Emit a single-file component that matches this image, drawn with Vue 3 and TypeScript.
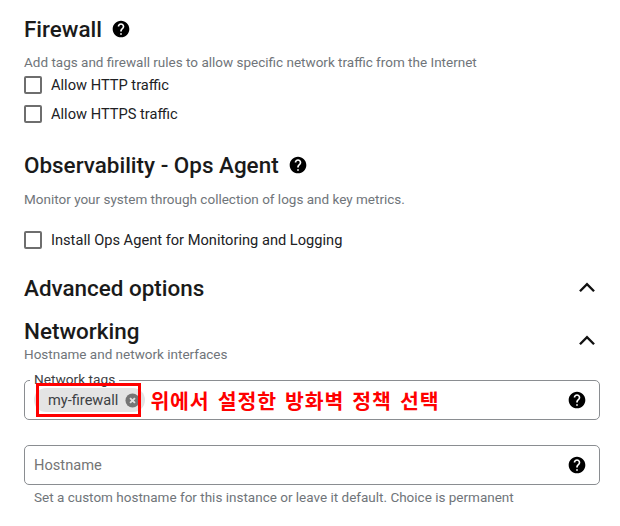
<script setup lang="ts">
const helpPath = 'M12 2C6.48 2 2 6.48 2 12s4.48 10 10 10 10-4.48 10-10S17.52 2 12 2zm1 17h-2v-2h2v2zm2.07-7.75l-.9.92C13.45 12.9 13 13.5 13 15h-2v-.5c0-1.1.45-2.1 1.17-2.83l1.24-1.26c.37-.36.59-.86.59-1.41 0-1.1-.9-2-2-2s-2 .9-2 2H8c0-2.21 1.79-4 4-4s4 1.79 4 4c0 .88-.36 1.68-.93 2.25z'
const chevron = 'M5.5 15L12 8.5l6.5 6.5'
</script>

<template>
  <main class="page">
    <section class="firewall">
      <div class="heading">
        <h2>Firewall</h2>
        <svg class="help" viewBox="0 0 24 24"><path :d="helpPath" /></svg>
      </div>
      <p class="sub">Add tags and firewall rules to allow specific network traffic from the Internet</p>
      <label class="check"><span class="box"></span>Allow HTTP traffic</label>
      <label class="check second"><span class="box"></span>Allow HTTPS traffic</label>
    </section>

    <section class="ops">
      <div class="heading">
        <h2>Observability - Ops Agent</h2>
        <svg class="help" viewBox="0 0 24 24"><path :d="helpPath" /></svg>
      </div>
      <p class="sub">Monitor your system through collection of logs and key metrics.</p>
      <label class="check ops-check"><span class="box"></span>Install Ops Agent for Monitoring and Logging</label>
    </section>

    <div class="collapse advanced">
      <h2>Advanced options</h2>
      <svg class="chev" viewBox="0 0 24 24"><path :d="chevron" /></svg>
    </div>

    <div class="collapse networking">
      <div>
        <h2>Networking</h2>
        <p class="sub">Hostname and network interfaces</p>
      </div>
      <svg class="chev" viewBox="0 0 24 24"><path :d="chevron" /></svg>
    </div>

    <div class="field tags">
      <span class="legend">Network tags</span>
      <span class="chip">
        my-firewall
        <svg class="chip-x" viewBox="0 0 16 16">
          <circle cx="8" cy="8" r="7.5" fill="#757575" />
          <path d="M5.4 5.4l5.2 5.2M10.6 5.4l-5.2 5.2" stroke="#e0e0e0" stroke-width="2" fill="none" />
        </svg>
      </span>
      <span class="note">위에서 설정한 방화벽 정책 선택</span>
      <span class="redbox"></span>
      <svg class="help field-help" viewBox="0 0 24 24"><path :d="helpPath" /></svg>
    </div>

    <div class="field host">
      <span class="placeholder">Hostname</span>
      <svg class="help field-help" viewBox="0 0 24 24"><path :d="helpPath" /></svg>
    </div>
    <p class="hint">Set a custom hostname for this instance or leave it default. Choice is permanent</p>
  </main>
</template>

<style>
html, body { margin: 0; background: #fff; }
</style>

<style scoped>
.page {
  width: 620px;
  height: 526px;
  box-sizing: border-box;
  padding: 16px 20px 0 24px;
  overflow: hidden;
  font-family: Roboto, "Noto Sans CJK KR", sans-serif;
  color: #202124;
}
h2 {
  margin: 0;
  font-size: 22.45px;
  line-height: 26px;
  font-weight: 500;
  color: #1a1a1a;
}
.heading { display: flex; align-items: center; gap: 9px; }
.help { width: 20px; height: 20px; fill: #000; flex: none; }
.sub {
  margin: 0;
  font-size: 13.5px;
  line-height: 20px;
  color: #70757a;
}
.firewall .sub { margin-top: 10px; }
.check {
  display: flex;
  align-items: center;
  gap: 9px;
  height: 20px;
  font-size: 14.65px;
  color: #202124;
}
.check.second { margin-top: 9px; }
.firewall .check:first-of-type { margin-top: 3px; }
.box {
  width: 14px;
  height: 14px;
  border: 2px solid #6e6e6e;
  border-radius: 2px;
  flex: none;
}
.ops { margin-top: 28px; }
.ops .sub { margin-top: 11px; }
.ops-check { margin-top: 21px; }
.collapse { display: flex; justify-content: space-between; }
.advanced { margin-top: 25px; align-items: center; }
.networking { margin-top: 17px; align-items: center; }
.chev { width: 26px; height: 26px; fill: none; stroke: #111; stroke-width: 2.2; margin-right: 0.5px; }
.field {
  position: relative;
  display: flex;
  align-items: center;
  height: 40px;
  box-sizing: border-box;
  border: 1px solid #8a8d91;
  border-radius: 5px;
  padding: 0 12px 0 9px;
}
.tags { margin-top: 16px; }
.legend {
  position: absolute;
  left: 5px;
  top: -9px;
  padding: 0 4px;
  background: #fff;
  font-size: 13.7px;
  line-height: 14px;
  color: #3c4043;
}
.chip {
  display: flex;
  align-items: center;
  gap: 7px;
  height: 24px;
  padding: 0 5px 0 14px;
  border-radius: 12px;
  background: #e4e4e4;
  font-size: 14.6px;
  color: #3c4043;
}
.chip-x { width: 15px; height: 15px; }
.note {
  margin-left: 5px;
  font-family: "Noto Sans CJK KR", sans-serif;
  font-size: 20.5px;
  font-weight: 700;
  line-height: 24px;
  letter-spacing: 0.85px;
  word-spacing: 2.7px;
  color: #f00;
  white-space: nowrap;
}
.redbox {
  position: absolute;
  left: 11px;
  top: 2px;
  width: 99px;
  height: 28px;
  border: 3px solid #f00;
}
.field-help { margin-left: auto; }
.host { margin-top: 25px; }
.placeholder { font-size: 14.65px; color: #757575; }
.hint {
  margin: 3px 0 0 10px;
  font-size: 13.5px;
  line-height: 18px;
  color: #70757a;
  white-space: nowrap;
}
</style>
